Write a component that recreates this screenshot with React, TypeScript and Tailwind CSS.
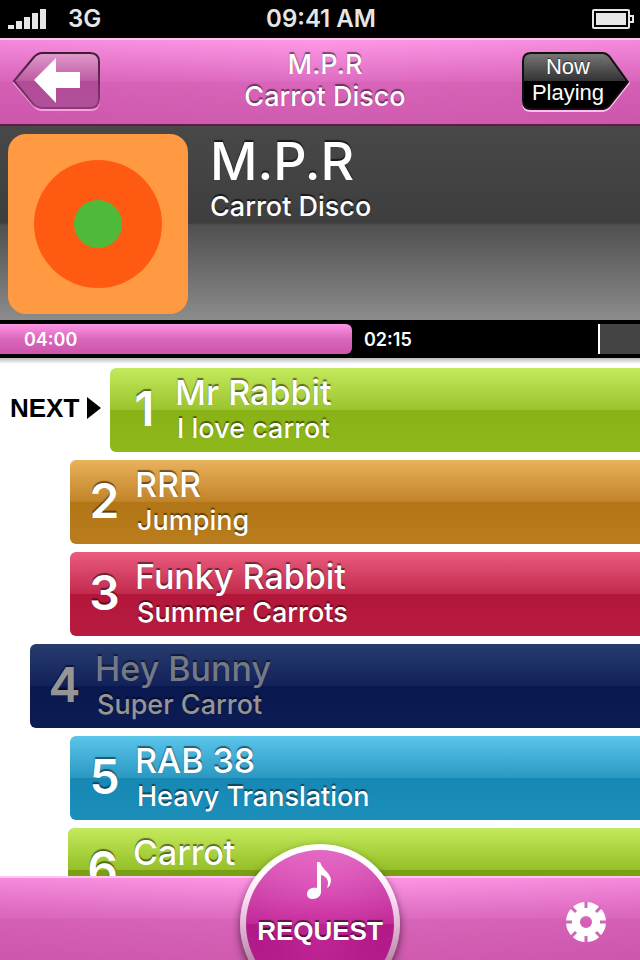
import clsx from "clsx";

type Track = {
  title: string;
  subtitle?: string;
  color: string;
  indent: string;
  played?: boolean;
};

const tracks: Track[] = [
  {
    title: "Mr Rabbit",
    subtitle: "I love carrot",
    color: "bg-[linear-gradient(#c3ea5c,#9ac42d_50%,#89b217_50%,#8eb81c)]",
    indent: "ml-[110px]",
  },
  {
    title: "RRR",
    subtitle: "Jumping",
    color: "bg-[linear-gradient(#e9b25b,#c1832a_50%,#b27616_50%,#b97d1d)]",
    indent: "ml-[70px]",
  },
  {
    title: "Funky Rabbit",
    subtitle: "Summer Carrots",
    color: "bg-[linear-gradient(#ea5c7e,#c22a4d_50%,#b2173a_50%,#b81b40)]",
    indent: "ml-[70px]",
  },
  {
    title: "Hey Bunny",
    subtitle: "Super Carrot",
    color: "bg-[linear-gradient(#283c6e,#12215a_50%,#0a1850_50%,#0d1c54)]",
    indent: "ml-[30px]",
    played: true,
  },
  {
    title: "RAB 38",
    subtitle: "Heavy Translation",
    color: "bg-[linear-gradient(#5bc5ea,#2a98c2_50%,#1788b4_50%,#1c8eba)]",
    indent: "ml-[70px]",
  },
  {
    title: "Carrot",
    color: "bg-[linear-gradient(#c3ea5c,#95c028_50%,#7a9f15_50%)]",
    indent: "ml-[68px]",
  },
];

const StatusBar = () => {
  return (
    <div className="grid h-[38px] shrink-0 grid-cols-3 items-center bg-black pr-1.5 pl-2 text-2xl font-semibold text-[#e6e6e6]">
      <div className="flex items-center gap-5">
        <svg width="40" height="20" viewBox="0 0 40 20" fill="currentColor">
          <path d="M0 16h6v4H0zM8 12h6v8H8zM16 8h6v12h-6zM24 4h6v16h-6zM32 0h6v20h-6z" />
        </svg>
        <span>3G</span>
      </div>
      <span className="text-center">09:41 AM</span>
      <svg className="justify-self-end" width="42" height="20" viewBox="0 0 42 20" fill="none">
        <rect x="1" y="1" width="36" height="18" rx="1" stroke="#e6e6e6" strokeWidth="2" />
        <rect x="4" y="4" width="30" height="12" fill="#e6e6e6" />
        <path d="M38 7h3v6h-3" stroke="#e6e6e6" strokeWidth="2" />
      </svg>
    </div>
  );
};

const Header = () => {
  return (
    <header className="grid h-[87px] shrink-0 grid-cols-[1fr_auto_1fr] border-t-2 border-b border-t-[#ffc4f1] border-b-[#5c2049] bg-[linear-gradient(90deg,#b5339424,#b5339400_50%,#b5339424),linear-gradient(#ff98e7,#dd6cc0_50%,#d966ba_50%,#d05cb0)] pr-2.5 pl-3">
      <button type="button" aria-label="Back" className="mt-2.5 self-start justify-self-start">
        <svg width="90" height="64" viewBox="0 0 90 64">
          <defs>
            <linearGradient id="back" x1="0" y1="0" x2="0" y2="1">
              <stop offset="0" stopColor="#e29acb" />
              <stop offset="0.5" stopColor="#bd5ca3" />
              <stop offset="0.5" stopColor="#b34b97" />
              <stop offset="1" stopColor="#b0509a" />
            </linearGradient>
            <linearGradient id="back-edge" x1="0" y1="0" x2="0" y2="1">
              <stop offset="0" stopColor="#3f1c36" />
              <stop offset="1" stopColor="#8d3a77" />
            </linearGradient>
          </defs>
          <path d="M2 33 22 8Q26 4 30 4H78Q87 4 87 13V51Q87 60 78 60H30Q26 60 22 56Z" fill="none" stroke="#f79fdf" strokeWidth="2" />
          <path d="M2 31 22 7Q26 3 30 3H78Q87 3 87 12V49Q87 58 78 58H30Q26 58 22 55Z" fill="url(#back)" stroke="url(#back-edge)" strokeWidth="2" />
          <path d="M22 30 44 8V22H68V38H44V53Z" fill="#fff" />
        </svg>
      </button>
      <h1 className="pt-[9px] pl-2 text-center text-[27px] leading-8 font-medium [text-shadow:0_-2px_1px_#00000080]">
        M.P.R
        <br />
        Carrot Disco
      </h1>
      <button type="button" className="relative mt-3 h-[60px] w-[108px] self-start justify-self-end pr-4 font-['Liberation_Sans',sans-serif] text-[22px] leading-[26px] [text-shadow:0_-1px_1px_#00000090]">
        <svg className="absolute top-0 left-0" width="108" height="60" viewBox="0 0 108 60">
          <defs>
            <linearGradient id="playing" x1="0" y1="0" x2="0" y2="1">
              <stop offset="0" stopColor="#787878" />
              <stop offset="0.5" stopColor="#333" />
              <stop offset="0.5" stopColor="#000" />
            </linearGradient>
          </defs>
          <path d="M1 10Q1 2 9 2H81Q84 2 87 5L107 31 87 56Q84 59 81 59H9Q1 59 1 51Z" fill="none" stroke="#ffc0ef" strokeWidth="2" />
          <path d="M1 9Q1 1 9 1H81Q84 1 87 4L106 30 87 54Q84 57 81 57H9Q1 57 1 49Z" fill="url(#playing)" stroke="#111" strokeWidth="2" />
        </svg>
        <span className="relative block pb-1">
          Now
          <br />
          Playing
        </span>
      </button>
    </header>
  );
};

const NowPlaying = () => {
  return (
    <section className="flex shrink-0 gap-[22px] border-t border-[#333] bg-[linear-gradient(#484848,#3e3e3e_50%,#505050_51%,#8c8c8c)] px-2 pt-2 pb-1.5">
      <svg className="rounded-[18px]" width="180" height="180" viewBox="0 0 180 180">
        <rect width="180" height="180" fill="#ff9a43" />
        <circle cx="90" cy="90" r="64" fill="#ff5a11" />
        <circle cx="90" cy="90" r="24" fill="#4fb93a" />
      </svg>
      <div className="font-medium [text-shadow:0_-2px_1px_#000000a0]">
        <h2 className="text-[52px] leading-14">M.P.R</h2>
        <p className="text-[27px] leading-[34px]">Carrot Disco</p>
      </div>
    </section>
  );
};

const Progress = () => {
  return (
    <div className="flex h-[38px] shrink-0 bg-black pt-1 pb-1 text-lg leading-8 font-semibold">
      <div className="h-[30px] w-[55%] rounded-r-md bg-[linear-gradient(#ff96e6,#da66bb_50%,#cd55ab)] pl-6">04:00</div>
      <span className="pl-3">02:15</span>
      <div className="ml-auto h-[30px] w-[42px] border-l-2 border-white bg-[#444]" />
    </div>
  );
};

const TrackRow = ({ track, index }: { track: Track; index: number }) => {
  return (
    <li className="relative">
      {index === 0 && (
        <div className="absolute top-0 left-2.5 flex h-20 items-center gap-2 font-['Liberation_Sans',sans-serif] text-[26px] font-bold text-black">
          NEXT
          <svg width="14" height="22" viewBox="0 0 14 22">
            <path d="M0 0 14 11 0 22Z" />
          </svg>
        </div>
      )}
      <div
        className={clsx(
          "flex h-[84px] rounded-l-md font-medium [text-shadow:0_-2px_1px_#00000080]",
          track.color,
          track.indent,
          track.played && "text-[#959595]"
        )}
      >
        <span className="w-[65px] pl-1 text-center text-5xl leading-[82px] font-semibold">{index + 1}</span>
        <div className="pt-[5px]">
          <h3 className={clsx("text-[34px] leading-10", track.played && "text-[#747988]")}>{track.title}</h3>
          {track.subtitle && <p className="pl-0.5 text-[27px] leading-8">{track.subtitle}</p>}
        </div>
      </div>
    </li>
  );
};

const Footer = () => {
  return (
    <footer className="relative flex h-[84px] shrink-0 items-center justify-end border-t-2 border-[#ffc4f1] bg-[linear-gradient(90deg,#b5339424,#b5339400_50%,#b5339424),linear-gradient(#ff98e7,#dd6cc0_50%,#d966ba_50%,#d05cb0)] pr-[34px]">
      <button
        type="button"
        className="absolute -top-[34px] left-1/2 size-40 -translate-x-1/2 rounded-full bg-[linear-gradient(#fff_20%,#fbd9f3_35%,#b585a8_75%,#a07094)] p-1.5 shadow-[0_4px_8px_#00000090]"
      >
        <span className="flex h-full flex-col items-center rounded-full bg-[radial-gradient(circle_at_50%_60%,#e040b040,#a0107800_40%,#a0107830_75%),linear-gradient(#f47ed6,#c42c9b_50%,#b31b89_50%,#b81d8e)] pt-3 text-[26px] font-bold">
          <svg width="26" height="38" viewBox="0 0 26 38" fill="#fff">
            <path d="M10 0H13Q14 4 18 8C22 12 24 15 24 18C24 22 22 25 20 26C22 21 21 17 18 15Q16 13 14 13V30C14 34 10 37 6 37C2 37 0 35 0 32C0 28 4 25 10 26Z" />
          </svg>
          <span className="mt-[15px] font-['Liberation_Sans',sans-serif] leading-8 [text-shadow:0_-2px_1px_#00000090]">REQUEST</span>
        </span>
      </button>
      <button type="button" aria-label="Settings" className="mt-1.5">
        <svg width="40" height="40" viewBox="0 0 40 40">
          <circle cx="20" cy="20" r="13" fill="none" stroke="#fff" strokeWidth="14" />
          <path d="M20 0V6M20 34V40M0 20H6M34 20H40M5.500 5.500 10 10M30 30 34.500 34.500M5.500 34.500 10 30M30 10 34.500 5.500" stroke="#d465b6" strokeWidth="3" />
        </svg>
      </button>
    </footer>
  );
};

const App = () => {
  return (
    <div className="flex h-screen flex-col overflow-hidden bg-white font-['Inter',sans-serif] text-white">
      <StatusBar />
      <Header />
      <NowPlaying />
      <Progress />
      <ol className="flex min-h-0 flex-1 flex-col gap-2 overflow-hidden bg-[linear-gradient(#bbb,#fff_6px)] pt-2.5">
        {tracks.map((track, index) => (
          <TrackRow key={track.title} track={track} index={index} />
        ))}
      </ol>
      <Footer />
    </div>
  );
};

export default App;
